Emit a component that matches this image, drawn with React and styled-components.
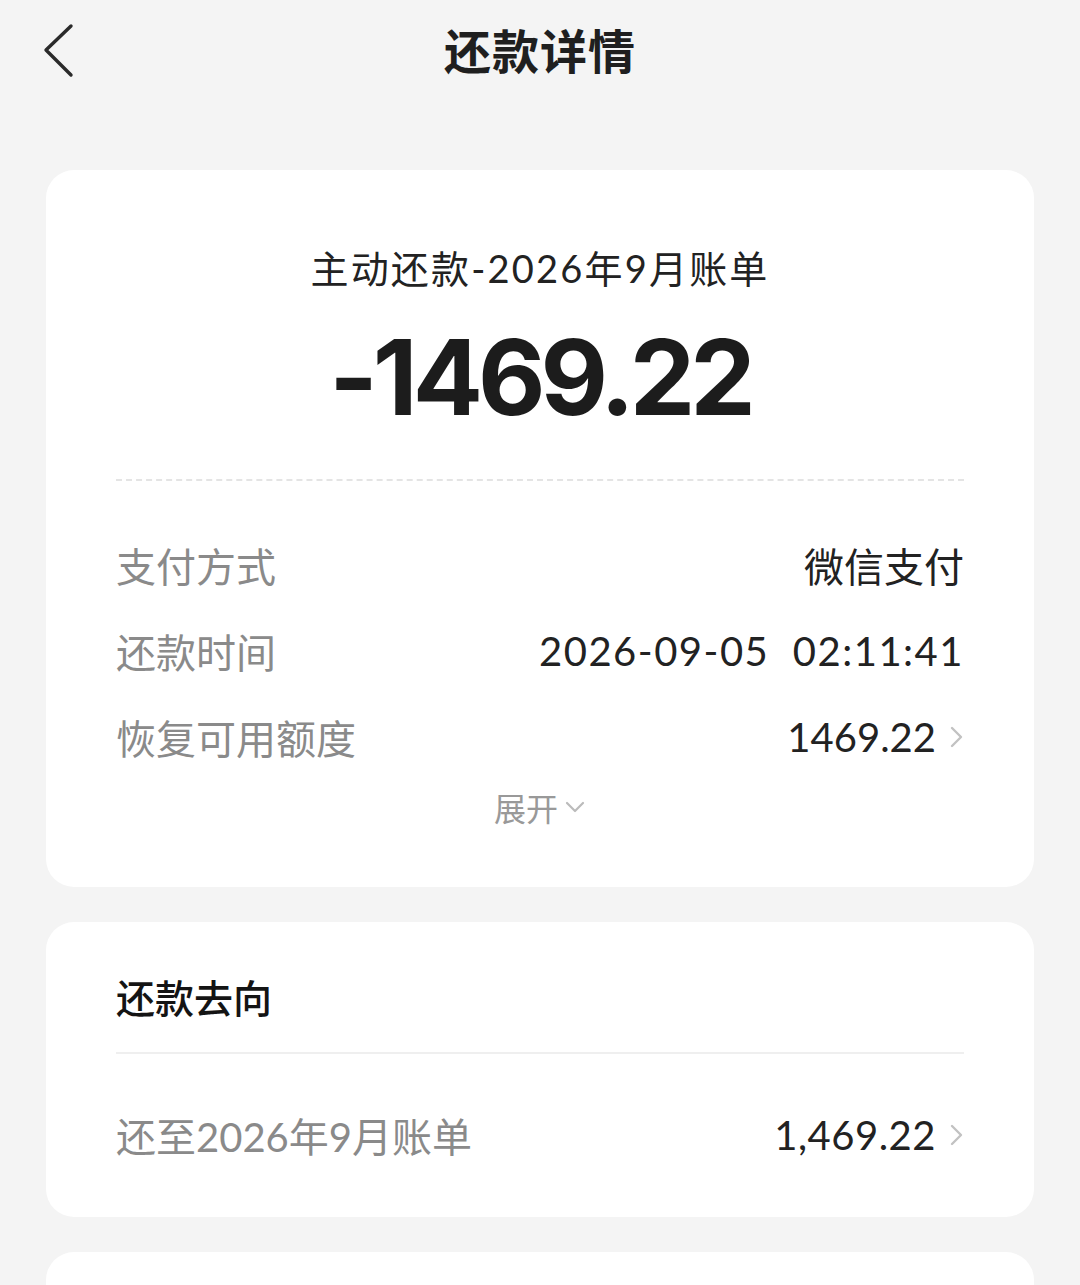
import React from "react";
import styled, { createGlobalStyle } from "styled-components";

const GlobalStyle = createGlobalStyle`
  html, body {
    margin: 0;
    padding: 0;
    background: #f4f4f4;
    font-family: Lato, "Noto Sans CJK SC", sans-serif;
  }
  body {
    height: 1285px;
    overflow: hidden;
  }
`;

const Page = styled.div`
  width: 1080px;
  background: #f4f4f4;
`;

const Header = styled.div`
  height: 100px;
  display: flex;
  align-items: center;
  justify-content: center;
  position: relative;
`;

const BackButton = styled.div`
  position: absolute;
  left: 40px;
  top: 20px;
  width: 40px;
  height: 60px;
`;

const Title = styled.h1`
  margin: 0 0 4px;
  font-family: "Noto Sans CJK SC", sans-serif;
  font-size: 47px;
  font-weight: 700;
  color: #1f1f1f;
  letter-spacing: 1px;
`;

const Cards = styled.div`
  display: flex;
  flex-direction: column;
  gap: 35px;
  padding: 70px 46px 0;
`;

const Card = styled.div`
  background: #fff;
  border-radius: 28px;
  padding: ${(p) => p.$pad || "0 70px"};
  min-height: ${(p) => p.$minH || "auto"};
`;

const Subtitle = styled.div`
  text-align: center;
  font-size: 38px;
  line-height: 50px;
  letter-spacing: 2.2px;
  color: #222;
`;

const Amount = styled.div`
  margin-top: 22px;
  text-align: center;
  font-family: Inter, "Noto Sans", sans-serif;
  font-size: 104px;
  line-height: 124px;
  font-weight: 700;
  color: #1c1c1c;
  letter-spacing: -5px;
`;

const Dashed = styled.div`
  margin-top: 40px;
  border-top: 2px dashed #e4e4e4;
`;

const Rows = styled.div`
  margin-top: 41px;
`;

const Row = styled.div`
  height: 86px;
  display: flex;
  align-items: center;
  justify-content: space-between;
  margin-top: ${(p) => p.$top || 0}px;
`;

const Label = styled.span`
  font-size: 40px;
  color: #8a8a8a;
`;

const Value = styled.span`
  display: flex;
  align-items: center;
  gap: 12px;
  font-size: 40px;
  color: #222;
  white-space: pre;
  letter-spacing: ${(p) => p.$spread || 0}px;
`;

const Expand = styled.div`
  display: flex;
  align-items: center;
  justify-content: center;
  gap: 6px;
  height: 44px;
  margin-top: 5px;
  font-family: "Noto Sans CJK SC", sans-serif;
  font-size: 32px;
  color: #999;
`;

const SectionTitle = styled.div`
  font-family: "Noto Sans CJK SC", sans-serif;
  font-size: 39px;
  line-height: 50px;
  font-weight: 500;
  color: #141414;
`;

const Divider = styled.div`
  margin-top: 31px;
  border-top: 2px solid #efefef;
`;

const Chevron = () => (
  <svg width="16" height="26" viewBox="0 0 16 26">
    <polyline points="4,4 13,13 4,22" fill="none" stroke="#c2c2c2" strokeWidth="2.4" strokeLinecap="round" strokeLinejoin="round" />
  </svg>
);

const ChevronDown = () => (
  <svg width="22" height="14" viewBox="0 0 22 14">
    <polyline points="3,3 11,11 19,3" fill="none" stroke="#bbb" strokeWidth="2.2" strokeLinecap="round" strokeLinejoin="round" />
  </svg>
);

export default function App() {
  return (
    <Page>
      <GlobalStyle />
      <Header>
        <BackButton>
          <svg width="40" height="60" viewBox="0 0 40 60">
            <polyline points="31,6 6,30 31,55" fill="none" stroke="#2a2a2a" strokeWidth="3.4" strokeLinecap="round" strokeLinejoin="round" />
          </svg>
        </BackButton>
        <Title>还款详情</Title>
      </Header>
      <Cards>
        <Card $pad="73px 70px 58px">
          <Subtitle>主动还款-2026年9月账单</Subtitle>
          <Amount>-1469.22</Amount>
          <Dashed />
          <Rows>
            <Row>
              <Label>支付方式</Label>
              <Value>微信支付</Value>
            </Row>
            <Row>
              <Label>还款时间</Label>
              <Value $spread={1.5}>2026-09-05  02:11:41</Value>
            </Row>
            <Row>
              <Label>恢复可用额度</Label>
              <Value>
                1469.22
                <Chevron />
              </Value>
            </Row>
          </Rows>
          <Expand>
            展开
            <ChevronDown />
          </Expand>
        </Card>
        <Card $pad="49px 70px 39px">
          <SectionTitle>还款去向</SectionTitle>
          <Divider />
          <Row $top={38}>
            <Label>还至2026年9月账单</Label>
            <Value $spread={0.5}>
              1,469.22
              <Chevron />
            </Value>
          </Row>
        </Card>
        <Card $minH="200px" />
      </Cards>
    </Page>
  );
}
